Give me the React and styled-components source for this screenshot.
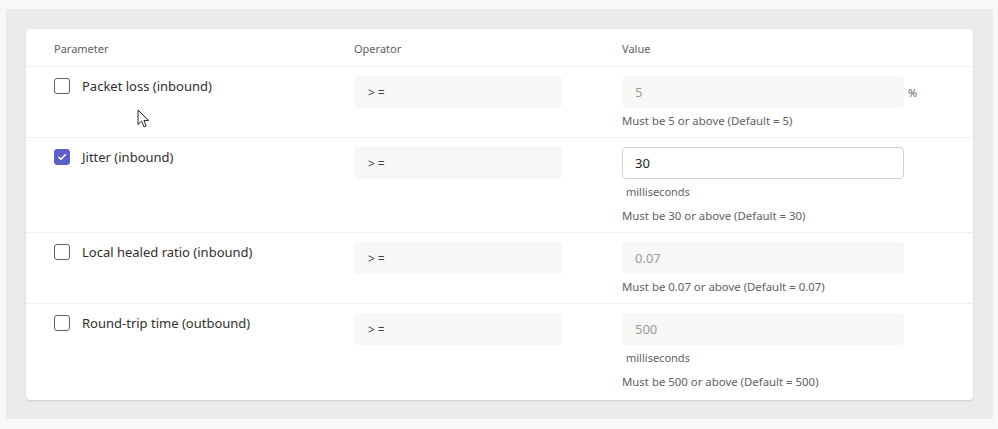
import React from "react";
import styled, { createGlobalStyle } from "styled-components";

const Global = createGlobalStyle`
  html, body { margin: 0; padding: 0; background: #f8f8f8; }
  body { font-family: "Noto Sans", "Open Sans", sans-serif; color: #242424; }
`;

const rows = [
  { name: "Packet loss (inbound)", value: "5", unit: "%", unitBelow: false, hint: "Must be 5 or above (Default = 5)" },
  { name: "Jitter (inbound)", value: "30", checked: true, unit: "milliseconds", unitBelow: true, hint: "Must be 30 or above (Default = 30)" },
  { name: "Local healed ratio (inbound)", value: "0.07", hint: "Must be 0.07 or above (Default = 0.07)" },
  { name: "Round-trip time (outbound)", value: "500", unit: "milliseconds", unitBelow: true, hint: "Must be 500 or above (Default = 500)" },
];

export default function App() {
  return (
    <>
      <Global />
      <Page>
        <Panel>
          <Card>
            <HeaderRow>
              <HeadCell>Parameter</HeadCell>
              <HeadCell>Operator</HeadCell>
              <HeadCell>Value</HeadCell>
            </HeaderRow>
            {rows.map((r) => (
              <Row key={r.name}>
                <ParamCell>
                  <Check $checked={r.checked}>
                    {r.checked && (
                      <svg width="10" height="10" viewBox="0 0 10 10">
                        <path d="M1.8 5.2 L4 7.3 L8.3 2.7" fill="none" stroke="#fff" strokeWidth="1.5" strokeLinecap="round" strokeLinejoin="round" />
                      </svg>
                    )}
                  </Check>
                  <Label>{r.name}</Label>
                </ParamCell>
                <div>
                  <OpBox>&gt;=</OpBox>
                </div>
                <ValueCell>
                  <InputLine>
                    <ValueBox $active={r.checked}>{r.value}</ValueBox>
                    {r.unit && !r.unitBelow && <SideUnit>{r.unit}</SideUnit>}
                  </InputLine>
                  {r.unitBelow && <BelowUnit>{r.unit}</BelowUnit>}
                  <Hint $afterUnit={r.unitBelow}>{r.hint}</Hint>
                </ValueCell>
              </Row>
            ))}
          </Card>
          <Cursor width="14" height="20" viewBox="0 0 14 20">
            <path d="M1 1 L1 15.5 L4.6 12.2 L7 17.8 L9.2 16.9 L6.9 11.4 L11.6 11.4 Z" fill="#fff" stroke="#222" strokeWidth="1" strokeLinejoin="round" />
          </Cursor>
        </Panel>
      </Page>
    </>
  );
}

const Page = styled.div`
  width: 998px;
  height: 429px;
  padding: 9px 5px 10px 6px;
  box-sizing: border-box;
`;

const Panel = styled.div`
  position: relative;
  background: #ebebeb;
  border-radius: 3px;
  padding: 20px 20px 19px 20px;
  height: 100%;
  box-sizing: border-box;
`;

const Card = styled.div`
  background: #fff;
  border-radius: 4px;
  box-shadow: 0 1px 2px rgba(0, 0, 0, 0.12), 0 0 1px rgba(0, 0, 0, 0.08);
  height: 100%;
  box-sizing: border-box;
`;

const Grid = styled.div`
  display: grid;
  grid-template-columns: 300px 268px 1fr;
  padding-left: 28px;
`;

const HeaderRow = styled(Grid)`
  height: 38px;
  align-items: center;
  border-bottom: 1px solid #f0f0f0;
  box-sizing: border-box;
`;

const HeadCell = styled.div`
  font-size: 11px;
  line-height: 16px;
  color: #616161;
  padding-top: 3px;
`;

const Row = styled(Grid)`
  padding-top: 9px;
  padding-bottom: 8px;
  border-bottom: 1px solid #f0f0f0;
  &:last-child { border-bottom: none; }
`;

const ParamCell = styled.div`
  display: flex;
  align-items: center;
  gap: 12px;
  height: 20px;
  margin-top: 0;
`;

const Check = styled.span`
  width: 16px;
  height: 16px;
  box-sizing: border-box;
  border-radius: 3px;
  border: 1px solid ${(p) => (p.$checked ? "#5b5fc7" : "#616161")};
  background: ${(p) => (p.$checked ? "#5b5fc7" : "#fff")};
  display: flex;
  align-items: center;
  justify-content: center;
  flex: none;
`;

const Label = styled.span`
  font-size: 13px;
  line-height: 20px;
  color: #303030;
`;

const OpBox = styled.div`
  width: 208px;
  height: 32px;
  background: #f8f7f6;
  border-radius: 4px;
  box-sizing: border-box;
  padding-left: 14px;
  display: flex;
  align-items: center;
  font-size: 12px;
  color: #424242;
  letter-spacing: 3px;
`;

const ValueCell = styled.div`
  display: flex;
  flex-direction: column;
`;

const InputLine = styled.div`
  display: flex;
  align-items: center;
  gap: 4px;
  height: 32px;
`;

const ValueBox = styled.div`
  width: 282px;
  height: 32px;
  box-sizing: border-box;
  border-radius: 4px;
  padding-left: 12px;
  display: flex;
  align-items: center;
  font-size: 13px;
  background: ${(p) => (p.$active ? "#fff" : "#f8f7f6")};
  border: 1px solid ${(p) => (p.$active ? "#d1d1d1" : "#f8f7f6")};
  color: ${(p) => (p.$active ? "#242424" : "#9a9a9a")};
`;

const SideUnit = styled.span`
  font-size: 11px;
  color: #616161;
`;

const BelowUnit = styled.div`
  font-size: 11px;
  color: #616161;
  line-height: 16px;
  margin-top: 5px;
  padding-left: 4px;
`;

const Hint = styled.div`
  font-size: 11.4px;
  color: #616161;
  line-height: 16px;
  margin-top: ${(p) => (p.$afterUnit ? "8px" : "5px")};
`;

const Cursor = styled.svg`
  position: absolute;
  left: 131px;
  top: 100px;
`;
